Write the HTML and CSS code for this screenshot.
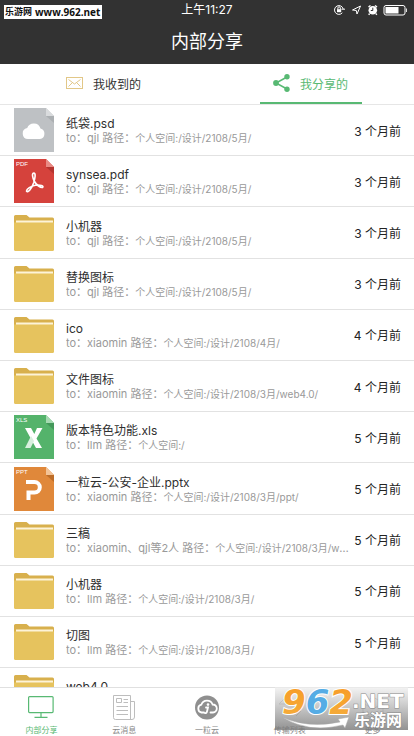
FILE: index.html
```html
<!DOCTYPE html>
<html lang="zh-CN">
<head>
<meta charset="utf-8">
<meta name="viewport" content="width=device-width, initial-scale=1">
<title>内部分享</title>
<link rel="stylesheet" href="styles.css">
</head>
<body>
<svg class="defs" aria-hidden="true">
  <symbol id="folder" viewBox="0 0 40 36">
    <path fill="#d8b04d" d="M0 1.500Q0 0 1.500 0H12.500L15.500 2.500H38.500Q40 2.500 40 4V12H0Z"/>
    <path fill="#fdf3d8" d="M2 5.500H39V8H2Z"/>
    <path fill="#e6c35e" d="M0 7.500H40V34.500Q40 36 38.500 36H1.500Q0 36 0 34.500Z"/>
  </symbol>
  <symbol id="psd" viewBox="0 0 40 44">
    <path fill="#bec1c4" d="M0 0H32L40 8V44H0Z"/>
    <path fill="#d9dbdd" d="M32 0L40 8H32Z"/>
    <path fill="#abafb2" d="M32 8H40V15Z"/>
    <path fill="#fff" d="M14 31a5.500 5.500 0 0 1-.8-10.900A7 7 0 0 1 26.500 20.500A5.400 5.400 0 0 1 26 31Z"/>
  </symbol>
  <symbol id="pdf" viewBox="0 0 40 44">
    <path fill="#d5423c" d="M0 0H32L40 8V44H0Z"/>
    <path fill="#e98a84" d="M32 0L40 8H32Z"/>
    <path fill="#b5342f" d="M32 8H40V15Z"/>
    <text class="ext" x="2" y="7">PDF</text>
    <path fill="none" stroke="#fff" stroke-width="1.600" stroke-linejoin="round" d="M20 14C17.500 14 18.500 19 20.500 22.500C22.500 26 26.500 29 28.500 28.500C30.500 27 26 25.500 21.500 26.200C17 27 12.500 30 12.500 32C14 34.500 18 29 19.800 23.500C21 19 22 14.500 20 14Z"/>
  </symbol>
  <symbol id="xls" viewBox="0 0 40 44">
    <path fill="#54b36b" d="M0 0H32L40 8V44H0Z"/>
    <path fill="#a5d9b1" d="M32 0L40 8H32Z"/>
    <path fill="#43985a" d="M32 8H40V15Z"/>
    <text class="ext" x="2" y="7">XLS</text>
    <path fill="#fff" d="M11 13H17L20.300 19L23 13H28.500L22.500 23.500L28 33H22Z"/>
    <path fill="#d8f0de" d="M17 21L20 26L16.500 33H11Z"/>
  </symbol>
  <symbol id="ppt" viewBox="0 0 40 44">
    <path fill="#e0883a" d="M0 0H32L40 8V44H0Z"/>
    <path fill="#f3c396" d="M32 0L40 8H32Z"/>
    <path fill="#bd6d28" d="M32 8H40V15Z"/>
    <text class="ext" x="2" y="7">PPT</text>
    <path fill="none" stroke="#fff" stroke-width="4" d="M12 15H20.500a5.300 5.300 0 0 1 0 10.600H14.500V33"/>
  </symbol>
</svg>

<div class="app">
  <header class="top">
    <div class="status">
      <span class="clock">上午11:27</span>
      <svg class="status-icons" viewBox="0 0 76 14" aria-hidden="true">
        <g fill="none" stroke="#fff">
          <path d="M9.300 9.800A4.400 4.400 0 1 1 10.200 6M8.500 6.200H12"/>
          <path fill="#fff" stroke="none" d="M4 6.200H8.200V9.200H4Z"/>
          <path d="M4.900 6.500V5a1.200 1.200 0 0 1 2.400 0V6.500"/>
          <path d="M19.500 7L27.500 3L24 11L23.300 7.500Z"/>
          <path stroke-width="1.500" d="M35.500 4L37.500 2.500M42 2.500L44 4M36.500 10.500L35.800 11.800M43 10.500L43.700 11.800"/>
          <rect x="51" y="2.500" width="21" height="9.500" rx="2"/>
        </g>
        <circle cx="39.800" cy="7.300" r="4.300" fill="#fff"/>
        <path d="M39.800 4.700V7.500H37.800" fill="none" stroke="#323232"/>
        <rect x="52.500" y="4" width="13" height="6.500" fill="#fff"/>
        <path d="M73.500 5.500V9" stroke="#ddd"/>
      </svg>
      <span class="site-tag"><span>乐游网</span><span class="domain">www.962.net</span></span>
    </div>
    <h1>内部分享</h1>
  </header>

  <div class="tabs" role="tablist">
    <button class="tab" type="button" role="tab" aria-selected="false">
      <svg viewBox="0 0 18 18" aria-hidden="true"><g fill="none" stroke="#e2c787" stroke-width="1"><rect x=".5" y="3.500" width="16" height="11"/><path d="M2.500 5.500L8.500 10L14.500 5.500M2.500 12.500L6 9M14.500 12.500L11 9"/></g></svg>
      <span>我收到的</span>
    </button>
    <button class="tab active" type="button" role="tab" aria-selected="true">
      <svg viewBox="0 0 18 18" aria-hidden="true"><path d="M14 3L3 9L14 15" fill="none" stroke="#58b973" stroke-width="1.500"/><g fill="#58b973"><circle cx="14" cy="2.800" r="2.700"/><circle cx="3" cy="9" r="2.900"/><circle cx="14" cy="15.200" r="2.700"/></g></svg>
      <span>我分享的</span>
    </button>
  </div>

  <ul class="list">
    <li><svg class="file"><use href="#psd"/></svg><div class="info"><p class="name">纸袋.psd</p><p class="meta">to：qjl 路径：<span>个人空间:/设计/2108/5月/</span></p></div><time>3 个月前</time></li>
    <li><svg class="file"><use href="#pdf"/></svg><div class="info"><p class="name">synsea.pdf</p><p class="meta">to：qjl 路径：<span>个人空间:/设计/2108/5月/</span></p></div><time>3 个月前</time></li>
    <li><svg class="folder"><use href="#folder"/></svg><div class="info"><p class="name">小机器</p><p class="meta">to：qjl 路径：<span>个人空间:/设计/2108/5月/</span></p></div><time>3 个月前</time></li>
    <li><svg class="folder"><use href="#folder"/></svg><div class="info"><p class="name">替换图标</p><p class="meta">to：qjl 路径：<span>个人空间:/设计/2108/5月/</span></p></div><time>3 个月前</time></li>
    <li><svg class="folder"><use href="#folder"/></svg><div class="info"><p class="name">ico</p><p class="meta">to：xiaomin 路径：<span>个人空间:/设计/2108/4月/</span></p></div><time>4 个月前</time></li>
    <li><svg class="folder"><use href="#folder"/></svg><div class="info"><p class="name">文件图标</p><p class="meta">to：xiaomin 路径：<span>个人空间:/设计/2108/3月/web4.0/</span></p></div><time>4 个月前</time></li>
    <li><svg class="file"><use href="#xls"/></svg><div class="info"><p class="name">版本特色功能.xls</p><p class="meta">to：llm 路径：<span>个人空间:/</span></p></div><time>5 个月前</time></li>
    <li><svg class="file"><use href="#ppt"/></svg><div class="info"><p class="name">一粒云-公安-企业.pptx</p><p class="meta">to：xiaomin 路径：<span>个人空间:/设计/2108/3月/ppt/</span></p></div><time>5 个月前</time></li>
    <li><svg class="folder"><use href="#folder"/></svg><div class="info"><p class="name">三稿</p><p class="meta">to：xiaomin、qjl等2人 路径：<span>个人空间:/设计/2108/3月/web4.0/</span></p></div><time>5 个月前</time></li>
    <li><svg class="folder"><use href="#folder"/></svg><div class="info"><p class="name">小机器</p><p class="meta">to：llm 路径：<span>个人空间:/设计/2108/3月/</span></p></div><time>5 个月前</time></li>
    <li><svg class="folder"><use href="#folder"/></svg><div class="info"><p class="name">切图</p><p class="meta">to：llm 路径：<span>个人空间:/设计/2108/3月/</span></p></div><time>5 个月前</time></li>
    <li><svg class="folder"><use href="#folder"/></svg><div class="info"><p class="name">web4.0</p></div></li>
  </ul>

  <nav class="bottom">
    <a class="current" href="#share"><svg viewBox="0 0 28 28" aria-hidden="true"><g fill="none" stroke="#58b973" stroke-width="1.200"><rect x="1.600" y="3.600" width="24.500" height="16" rx="1"/><path d="M14 20V24M7.500 24.400H20.500"/></g></svg><span>内部分享</span></a>
    <a href="#news"><svg viewBox="0 0 28 28" aria-hidden="true"><g fill="none" stroke="#bdbdbd"><path d="M3.500 2.500H20.500V26.500H5.500Q3.500 26.500 3.500 24.500ZM20.500 8.500H24.500V24Q24.500 26.500 22 26.500H19M6.500 5.500H11.500V9.500H6.500ZM13.500 6.500H18M13.500 9.500H18M6.500 13.500H18M6.500 17.500H18M6.500 21.500H18"/></g></svg><span>云消息</span></a>
    <a href="#cloud"><svg viewBox="0 0 28 28" aria-hidden="true"><circle cx="14" cy="14.500" r="12" fill="#8f8f8f"/><g fill="none" stroke="#fff" stroke-width="1.800" stroke-linecap="round"><path d="M11 19.500H8.500A4 4 0 0 1 8.300 11.700A6 6 0 0 1 19.600 11.500A4 4 0 0 1 20 19.500H17.500M13 14.500H15L14 18.500Q13.500 20.500 11.500 20"/></g><circle cx="15" cy="11.600" r="1.300" fill="#fff"/></svg><span>一粒云</span></a>
    <a href="#transfer"><svg viewBox="0 0 28 28" aria-hidden="true"><path d="M3 11H19M9 18H25M3 11L8 6M25 18L20 23" fill="none" stroke="#aaa"/></svg><span>传输列表</span></a>
    <a href="#more"><svg viewBox="0 0 28 28" aria-hidden="true"><path d="M4 10L14 4L24 10V20L14 26L4 20ZM4 10L14 16L24 10" fill="none" stroke="#aaa"/></svg><span>更多</span></a>
  </nav>

  <svg class="watermark" viewBox="0 0 133 43" role="img" aria-label="962.NET 乐游网">
    <defs>
      <linearGradient id="shade" x1="0" y1="0" x2="0" y2="1"><stop offset="0" stop-color="#eee" stop-opacity=".7"/><stop offset=".45" stop-color="#bbb" stop-opacity=".8"/><stop offset="1" stop-color="#777" stop-opacity=".8"/></linearGradient>
      <linearGradient id="orange" x1="0" y1="0" x2="0" y2="1"><stop offset="0" stop-color="#f79a25"/><stop offset="1" stop-color="#f5ae3d"/></linearGradient>
    </defs>
    <rect width="133" height="43" fill="url(#shade)"/>
    <path d="M7 30Q33 42 65 35L63 32L74 30L70 41L68 38Q34 47 7 30Z" fill="#fff" stroke="#aaa" stroke-width=".5"/>
    <text class="mark-num" x="7" y="27"><tspan fill="url(#orange)">9</tspan><tspan fill="#55ace5">6</tspan><tspan fill="url(#orange)">2</tspan></text>
    <text class="mark-net" x="77" y="21">.NET</text>
    <text class="mark-cn" x="79" y="39">乐游网</text>
  </svg>
</div>
</body>
</html>
```
FILE: styles.css
```css
* { box-sizing: border-box; }

body {
  margin: 0;
  background: #fff;
  color: #2e2e2e;
  font-family: Inter, "Noto Sans CJK SC", sans-serif;
  font-size: 12px;
}

h1, p, ul { margin: 0; padding: 0; }

.defs { position: absolute; width: 0; height: 0; }

.ext {
  fill: #fff;
  font-family: "Liberation Sans", sans-serif;
  font-size: 6px;
}

.app {
  position: relative;
  display: flex;
  flex-direction: column;
  height: 100vh;
  overflow: hidden;
}

/* header */
.top {
  flex: none;
  background: #323232;
  color: #fff;
  text-align: center;
}

.status {
  position: relative;
  display: grid;
  grid-template-columns: 1fr auto 1fr;
  align-items: center;
  height: 20px;
}

.clock { grid-column: 2; line-height: 20px; }

.status-icons {
  justify-self: end;
  width: 76px;
  height: 14px;
  margin-right: 5px;
}

.site-tag {
  position: absolute;
  left: 4px;
  top: 5px;
  display: flex;
  gap: 3px;
  padding: 0 2px 0 1px;
  background: #fff;
  color: #111;
  font: bold 9px/14px "Open Sans", "Noto Sans CJK SC", sans-serif;
  white-space: nowrap;
}

.domain { font-size: 10px; }

h1 {
  font-size: 18px;
  font-weight: 400;
  line-height: 44px;
}

/* tabs */
.tabs {
  flex: none;
  display: flex;
  justify-content: space-around;
  height: 41px;
  border-bottom: 1px solid #e6e6e6;
}

.tab {
  display: flex;
  align-items: center;
  justify-content: center;
  gap: 9px;
  width: 102px;
  padding: 0;
  border: 0;
  border-bottom: 2px solid transparent;
  background: none;
  color: #333;
  font: inherit;
}

.tab svg { width: 18px; height: 18px; }

.tab.active { color: #58b973; border-color: #58b973; }

/* share list */
.list {
  flex: 1;
  min-height: 0;
  display: grid;
  grid-auto-rows: max(51px, 8.8%);
  overflow: hidden;
  list-style: none;
}

.list li {
  display: flex;
  align-items: center;
  gap: 12px;
  padding: 0 13px 0 14px;
  border-bottom: 1px solid #e2e2e2;
}

.file, .folder { flex: none; width: 40px; }
.file { height: 44px; }
.folder { height: 36px; }

.info { flex: 1; min-width: 0; margin-right: -8px; padding-top: 1px; }

.name { line-height: 15px; }

.list li:last-child .info { padding-bottom: 14px; }

.meta {
  overflow: hidden;
  color: #999;
  font-size: 11px;
  line-height: 14px;
  text-overflow: ellipsis;
  white-space: nowrap;
}

.meta span { font-size: 10px; }

time { flex: none; color: #222; }

/* bottom navigation */
.bottom {
  flex: none;
  display: grid;
  grid-template-columns: repeat(5, 1fr);
  height: 49px;
  border-top: 1px solid #e0e0e0;
  background: #fff;
}

.bottom a {
  display: flex;
  flex-direction: column;
  align-items: center;
  gap: 3px;
  padding-top: 5px;
  color: #888;
  font-size: 8px;
  line-height: 12px;
  text-decoration: none;
}

.bottom svg { width: 28px; height: 28px; }

.bottom .current { color: #58b973; }

.watermark {
  position: absolute;
  right: 6px;
  bottom: 6px;
  width: 133px;
  height: 43px;
}

.mark-num, .mark-net, .mark-cn { paint-order: stroke; }

.mark-num {
  font: italic bold 34px "DejaVu Sans", sans-serif;
  stroke: #fff;
  stroke-width: 2px;
}

.mark-net, .mark-cn {
  fill: #fff;
  stroke: #888;
  stroke-width: 1px;
}

.mark-net { font: bold 20px "DejaVu Sans", sans-serif; }
.mark-cn { font: bold 16px "Noto Sans CJK SC", sans-serif; }
```
